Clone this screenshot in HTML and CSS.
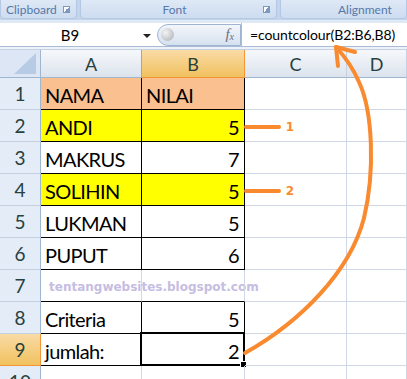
FILE: index.html
```html
<!DOCTYPE html>
<html lang="en">
<head>
    <meta charset="UTF-8">
    <title>countcolour</title>
    <link rel="stylesheet" href="styles.css">
</head>
<body>

<div class="window">
    <!-- ribbon group labels -->
    <div class="ribbon">
        <div class="group group-clip">Clipboard <span class="launcher"></span></div>
        <div class="group group-font"><span class="group-name">Font</span> <span class="launcher"></span></div>
        <div class="group group-align"><span class="group-name">Alignment</span></div>
    </div>

    <!-- formula bar -->
    <div class="formula-bar">
        <div class="name-box">B9</div>
        <span class="drop-arrow"></span>
        <div class="fx-pill">
            <span class="knob"></span>
            <span class="fx">f<sub>x</sub></span>
        </div>
        <div class="formula">=countcolour(B2:B6,B8)</div>
    </div>
    <div class="bar-gap"></div>

    <!-- sheet -->
    <div class="sheet">
        <div class="corner"><span class="corner-tri"></span></div>
        <div class="col-head">A</div>
        <div class="col-head sel">B</div>
        <div class="col-head">C</div>
        <div class="col-head">D</div>

        <div class="row-head">1</div>
        <div class="cell box peach">NAMA</div>
        <div class="cell box peach">NILAI</div>
        <div class="cell"></div><div class="cell"></div>

        <div class="row-head">2</div>
        <div class="cell box yellow">ANDI</div>
        <div class="cell box yellow num">5</div>
        <div class="cell"></div><div class="cell"></div>

        <div class="row-head">3</div>
        <div class="cell box">MAKRUS</div>
        <div class="cell box num">7</div>
        <div class="cell"></div><div class="cell"></div>

        <div class="row-head">4</div>
        <div class="cell box yellow">SOLIHIN</div>
        <div class="cell box yellow num">5</div>
        <div class="cell"></div><div class="cell"></div>

        <div class="row-head">5</div>
        <div class="cell box">LUKMAN</div>
        <div class="cell box num">5</div>
        <div class="cell"></div><div class="cell"></div>

        <div class="row-head">6</div>
        <div class="cell box">PUPUT</div>
        <div class="cell box num">6</div>
        <div class="cell"></div><div class="cell"></div>

        <div class="row-head">7</div>
        <div class="cell under"><span class="watermark">tentangwebsites.blogspot.com</span></div>
        <div class="cell under"></div>
        <div class="cell"></div><div class="cell"></div>

        <div class="row-head">8</div>
        <div class="cell box">Criteria</div>
        <div class="cell box num">5</div>
        <div class="cell"></div><div class="cell"></div>

        <div class="row-head sel">9</div>
        <div class="cell box">jumlah:</div>
        <div class="cell box num active">2</div>
        <div class="cell"></div><div class="cell"></div>

        <div class="row-head">10</div>
        <div class="cell"></div><div class="cell"></div>
        <div class="cell"></div><div class="cell"></div>
    </div>

    <!-- orange notes drawn over the sheet -->
    <svg class="notes" width="407" height="379" viewBox="0 0 407 379">
        <g stroke="#f98a2f" stroke-width="4" stroke-linecap="round" fill="none">
            <line x1="246" y1="127" x2="279" y2="127"/>
            <line x1="246" y1="191" x2="279" y2="191"/>
            <path d="M245,353 C300,322 350,272 364,218 C375,172 373,112 359,82 C353,68 346,58 336,47"/>
            <path d="M336,47 L355,52 M336,47 L338,66"/>
        </g>
        <text x="290" y="131" class="note-num">1</text>
        <text x="290" y="195" class="note-num">2</text>
    </svg>
</div>

</body>
</html>
```

FILE: styles.css
```css
/* page */
body {
    margin: 0;
    background: #fff;
    font-family: Lato, "Open Sans", sans-serif;
}

.window {
    position: relative;
    width: 407px;
    height: 379px;
    overflow: hidden;
}

/* ribbon */
.ribbon {
    display: flex;
    gap: 3px;
    height: 19px;
    background: #c3d5ec;
    padding-bottom: 1px;
    border-bottom: 3px solid #dfe8f5;
}

.group {
    display: flex;
    align-items: center;
    box-sizing: border-box;
    height: 19px;
    padding: 0 6px 0 5px;
    background: linear-gradient(#dfe9f6, #cddcf0);
    border: 1px solid #b4c8e3;
    border-top: none;
    border-radius: 0 0 4px 4px;
    color: #5478aa;
    font-size: 12px;
}

.group-clip {
    width: 77px;
    justify-content: space-between;
}

.group-font {
    width: 197px;
}

.group-align {
    flex: 1;
    padding-left: 57px;
}

.group-name {
    flex: 1;
    text-align: center;
}

.group-align .group-name {
    flex: none;
}

.launcher {
    width: 5px;
    height: 5px;
    border: 1px solid #7d98be;
    background: linear-gradient(135deg, #fff 50%, #7d98be 50%);
}

/* formula bar */
.formula-bar {
    display: flex;
    align-items: center;
    height: 23px;
    background: #fff;
    border-bottom: 1px solid #a9bcd6;
}

.name-box {
    width: 140px;
    text-align: center;
    font-size: 15px;
    color: #000;
}

.drop-arrow {
    width: 0;
    height: 0;
    margin: 2px 6px 0 3px;
    border: 4px solid transparent;
    border-top: 4px solid #222;
    border-bottom: none;
}

.fx-pill {
    display: flex;
    align-items: center;
    justify-content: space-between;
    box-sizing: border-box;
    width: 84px;
    height: 22px;
    padding: 0 6px 0 3px;
    background: linear-gradient(#f3f6fb, #d6e1ef);
    border: 1px solid #9fb4d2;
    border-radius: 11px 0 0 11px;
}

.knob {
    width: 13px;
    height: 13px;
    border-radius: 50%;
    background: radial-gradient(circle at 35% 35%, #f4f4f4, #a9acb1);
}

.fx {
    font-family: "Liberation Serif", serif;
    font-style: italic;
    font-size: 15px;
    color: #68707c;
}

.fx sub {
    font-size: 10px;
    vertical-align: -1px;
}

.formula {
    flex: 1;
    padding-left: 8px;
    font-size: 14px;
    letter-spacing: -0.1px;
    color: #000;
    border-left: 1px solid #a9bcd6;
    height: 23px;
    line-height: 23px;
}

.bar-gap {
    height: 2px;
    background: #eef2f8;
    border-bottom: 1px solid #c3d1e4;
}

/* sheet grid */
.sheet {
    display: grid;
    grid-template-columns: 41px 101px 103px 102px 60px;
    grid-template-rows: 28px repeat(9, 32px) 32px;
}

.corner {
    position: relative;
    background: #dce6f4;
    border-right: 1px solid #9eb6ce;
    border-bottom: 1px solid #9eb6ce;
}

.corner-tri {
    position: absolute;
    right: 4px;
    bottom: 3px;
    width: 0;
    height: 0;
    border-left: 22px solid transparent;
    border-bottom: 21px solid #b8cbe6;
}

.col-head {
    display: flex;
    align-items: center;
    justify-content: center;
    background: linear-gradient(#f6f8fb, #dce3ed);
    border-right: 1px solid #c5d1e1;
    border-bottom: 1px solid #9eb6ce;
    color: #27413e;
    font-size: 18px;
}

.col-head.sel {
    background: linear-gradient(#f9dba5, #f1c15f);
    border-right: 1px solid #f29536;
    border-left: 1px solid #f29536;
    border-bottom: 1px solid #f29536;
    margin-left: -1px;
}

.row-head {
    display: flex;
    align-items: center;
    justify-content: center;
    background: #e4ecf7;
    border-right: 1px solid #9eb6ce;
    border-bottom: 1px solid #c5d1e1;
    color: #27413e;
    font-size: 19px;
}

.row-head.sel {
    background: linear-gradient(#f9dba5, #f1c15f);
    border-right-color: #f29536;
    border-bottom-color: #f29536;
}

.cell {
    position: relative;
    display: flex;
    align-items: center;
    box-sizing: border-box;
    padding: 2px 5px 0 4px;
    border-right: 1px solid #d0d7e5;
    border-bottom: 1px solid #d0d7e5;
    font-size: 20px;
    letter-spacing: -0.6px;
    color: #000;
    white-space: nowrap;
}

.cell.box {
    border-right-color: #000;
    border-bottom-color: #000;
}

.cell.under {
    border-bottom-color: #000;
}

.cell.num {
    justify-content: flex-end;
}

.peach {
    background: #fac090;
}

.yellow {
    background: #ffff00;
}

.watermark {
    padding-left: 4px;
    font-family: "DejaVu Sans", sans-serif;
    font-weight: bold;
    font-size: 12px;
    letter-spacing: 0;
    color: #c6bde2;
}

/* active cell frame with fill handle */
.cell.active::before {
    content: "";
    position: absolute;
    left: -2px;
    top: -2px;
    right: -1px;
    bottom: -1px;
    border: 2px solid #000;
    box-shadow: inset 0 0 0 1px #fff;
}

.cell.active::after {
    content: "";
    position: absolute;
    right: -3px;
    bottom: -3px;
    width: 5px;
    height: 5px;
    background: #000;
    border: 1px solid #fff;
}

/* annotations */
.notes {
    position: absolute;
    left: 0;
    top: 0;
    pointer-events: none;
}

.note-num {
    fill: #f98a2f;
    font-family: "DejaVu Sans", sans-serif;
    font-weight: bold;
    font-size: 12px;
    text-anchor: middle;
}
```
